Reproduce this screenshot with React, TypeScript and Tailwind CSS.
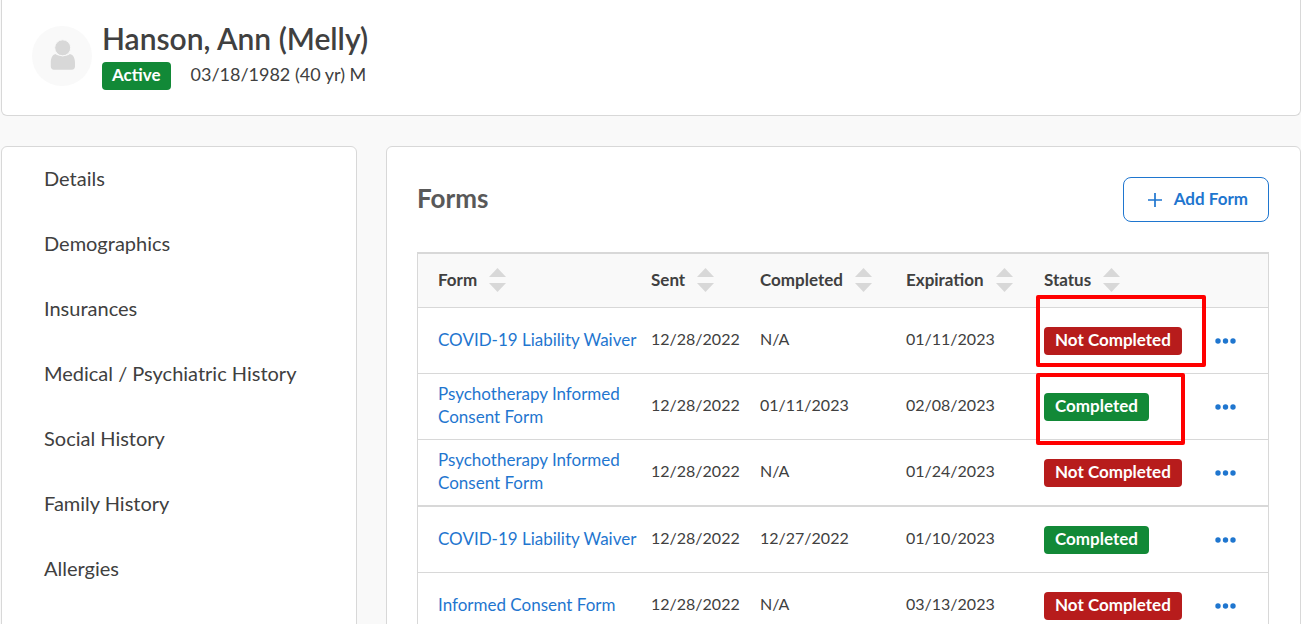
import React from 'react';

type FormStatus = 'Completed' | 'Not Completed';

interface FormRow {
  id: number;
  name: string;
  sent: string;
  completed: string;
  expiration: string;
  status: FormStatus;
  highlight?: string;
  divider?: boolean;
}

const menuItems = [
  'Details',
  'Demographics',
  'Insurances',
  'Medical / Psychiatric History',
  'Social History',
  'Family History',
  'Allergies',
];

const columns = [
  { label: 'Form', className: 'pl-5' },
  { label: 'Sent', className: 'w-[109px] pl-[10px]' },
  { label: 'Completed', className: 'w-[146px] pl-[10px]' },
  { label: 'Expiration', className: 'w-[138px] pl-[10px]' },
  { label: 'Status', className: 'w-[171px] pl-[10px]' },
];

const forms: FormRow[] = [
  {
    id: 1,
    name: 'COVID-19 Liability Waiver',
    sent: '12/28/2022',
    completed: 'N/A',
    expiration: '01/11/2023',
    status: 'Not Completed',
    highlight: '-top-8 -bottom-3 -left-2 -right-6',
  },
  {
    id: 2,
    name: 'Psychotherapy Informed Consent Form',
    sent: '12/28/2022',
    completed: '01/11/2023',
    expiration: '02/08/2023',
    status: 'Completed',
    highlight: '-top-5 -bottom-6 -left-2 -right-9',
  },
  {
    id: 3,
    name: 'Psychotherapy Informed Consent Form',
    sent: '12/28/2022',
    completed: 'N/A',
    expiration: '01/24/2023',
    status: 'Not Completed',
    divider: true,
  },
  {
    id: 4,
    name: 'COVID-19 Liability Waiver',
    sent: '12/28/2022',
    completed: '12/27/2022',
    expiration: '01/10/2023',
    status: 'Completed',
  },
  {
    id: 5,
    name: 'Informed Consent Form',
    sent: '12/28/2022',
    completed: 'N/A',
    expiration: '03/13/2023',
    status: 'Not Completed',
  },
];

const SortIcon: React.FC = () => (
  <svg width="17" height="24" viewBox="0 0 17 24" fill="#d8d8d8" aria-hidden="true">
    <path d="M8.5 0 17 9H0z" />
    <path d="M0 15h17l-8.5 9z" />
  </svg>
);

const AvatarIcon: React.FC = () => (
  <svg width="60" height="60" viewBox="0 0 60 60" aria-hidden="true" className="shrink-0">
    <circle cx="30" cy="30" r="30" fill="#f9f9f9" />
    <path
      d="M23.5 28c1.8 1.4 4 2.2 7.2 2.2s5.400-.8 7.200-2.200c3.600.8 5.100 4.500 5.100 9v3.500c0 2-1.200 3.200-3.200 3.200H22c-2 0-3.200-1.200-3.200-3.200V37c0-4.500 1.300-8.200 4.700-9z"
      fill="#d8d8d8"
    />
    <circle cx="30.700" cy="21.800" r="8" fill="#d8d8d8" stroke="#f9f9f9" />
  </svg>
);

const StatusBadge: React.FC<{ status: FormStatus; highlight?: string }> = ({ status, highlight }) => (
  <span
    className={`relative inline-flex h-7 items-center rounded px-[11px] pb-[3px] align-middle font-bold whitespace-nowrap text-white ${
      status === 'Completed' ? 'bg-[#128937]' : 'bg-[#b71c1c]'
    }`}
  >
    {status}
    {highlight && (
      <span className={`pointer-events-none absolute rounded-xs border-4 border-[#ff0000] ${highlight}`} />
    )}
  </span>
);

const PatientHeader: React.FC = () => (
  <header className="flex h-[116px] rounded-b-md border border-t-0 border-[#d8d8d8] bg-white pt-[26px] pl-[30px]">
    <AvatarIcon />
    <div className="-mt-1 ml-[10px]">
      <h1 className="text-[30px] leading-8 font-semibold">Hanson, Ann (Melly)</h1>
      <div className="mt-2 flex items-center gap-5">
        <span className="flex h-7 items-center rounded bg-[#128937] px-[10px] pb-[3px] text-[17px] font-bold text-white">
          Active
        </span>
        <span className="pb-1 text-lg leading-6">03/18/1982 (40 yr) M</span>
      </div>
    </div>
  </header>
);

const SideMenu: React.FC = () => (
  <nav className="w-[356px] shrink-0 rounded-md border border-[#d8d8d8] bg-white">
    {menuItems.map((item) => (
      <a key={item} href="#" className="flex h-[65px] items-center pb-1 pl-[42px] text-[20px]">
        {item}
      </a>
    ))}
  </nav>
);

const FormsTable: React.FC = () => (
  <table className="mt-[30px] w-full table-fixed border-separate border-spacing-0 border-x border-t-2 border-[#d8d8d8] text-left text-[17px]">
    <thead>
      <tr className="h-[54px] bg-[#f9f9f9]">
        {columns.map(({ label, className }) => (
          <th key={label} className={`border-b border-[#d8d8d8] pb-[2px] font-bold ${className}`}>
            <button type="button" className="flex items-center gap-3">
              {label}
              <SortIcon />
            </button>
          </th>
        ))}
        <th className="w-[63px] border-b border-[#d8d8d8]" />
      </tr>
    </thead>
    <tbody>
      {forms.map((form) => {
        const cell = form.divider
          ? 'h-[67px] border-b-2 border-[#d8d8d8] pl-[10px]'
          : 'h-[66px] border-b border-[#d8d8d8] pl-[10px]';
        return (
          <tr key={form.id}>
            <td className={`${cell} pb-[3px]`}>
              <a href="#" className="block pl-[10px] leading-[23px] text-[#1f76cf]">
                {form.name}
              </a>
            </td>
            <td className={`${cell} pb-[3px] text-base`}>{form.sent}</td>
            <td className={`${cell} pb-[3px] text-base`}>{form.completed}</td>
            <td className={`${cell} pb-[3px] text-base`}>{form.expiration}</td>
            <td className={cell}>
              <StatusBadge status={form.status} highlight={form.highlight} />
            </td>
            <td className={cell}>
              <button type="button" aria-label="More actions" className="block">
                <svg width="22" height="6" viewBox="0 0 22 6" fill="#1f76cf">
                  <circle cx="3" cy="3" r="2.700" />
                  <circle cx="10.500" cy="3" r="2.700" />
                  <circle cx="18" cy="3" r="2.700" />
                </svg>
              </button>
            </td>
          </tr>
        );
      })}
    </tbody>
  </table>
);

const App: React.FC = () => {
  return (
    <div className="h-screen overflow-hidden bg-[#f9f9f9] pl-px font-['Lato',sans-serif] text-[#404040]">
      <PatientHeader />
      <div className="mt-[30px] flex gap-[29px]">
        <SideMenu />
        <main className="min-w-0 flex-1 rounded-md border border-[#d8d8d8] bg-white py-[30px] pr-[31px] pl-[30px]">
          <div className="flex items-center justify-between">
            <h2 className="pb-[3px] text-[26px] leading-8 font-bold text-[#595959]">Forms</h2>
            <button
              type="button"
              className="flex h-[45px] items-center gap-2 rounded-lg border border-[#1f76cf] px-5 text-[17px] font-bold text-[#1f76cf]"
            >
              <svg width="22" height="14" viewBox="0 0 22 14" fill="none" stroke="#1f76cf" strokeWidth="1.700" aria-hidden="true">
                <path d="M11 0v14M4 7h14" />
              </svg>
              <span className="pb-[2px]">Add Form</span>
            </button>
          </div>
          <FormsTable />
        </main>
      </div>
    </div>
  );
};

export default App;
